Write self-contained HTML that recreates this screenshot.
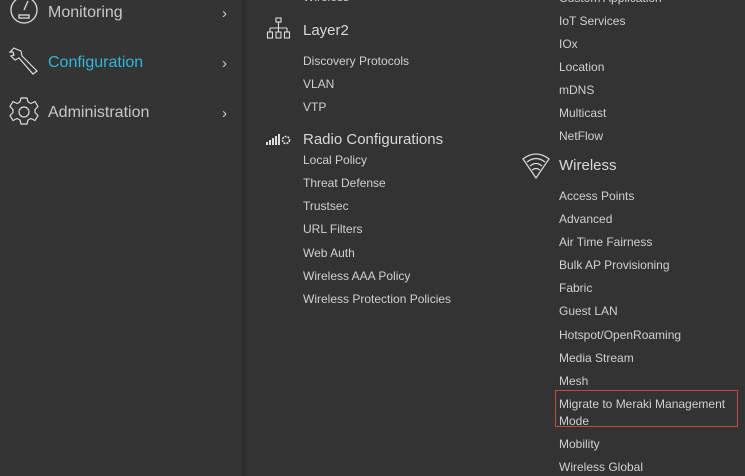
<!DOCTYPE html>
<html><head><meta charset="utf-8"><style>
body{margin:0;width:745px;height:476px;overflow:hidden;background:#333;font-family:"Liberation Sans",sans-serif;position:relative}
.t{position:absolute;white-space:nowrap;line-height:16px}
.i{font-size:12px;color:#d0d0d0;margin-top:1px}
.h{font-size:15px;color:#d8d8d8;line-height:18px;margin-top:1px}
.m{font-size:16px;color:#c8c8c8;line-height:20px;margin-top:1px}
.ch{position:absolute;left:222px;font-size:15px;color:#ccc;margin-top:1px}
svg{position:absolute}
</style></head><body>
<div style="position:absolute;left:242px;top:0;width:3px;height:476px;background:#2c2c2c"></div>
<div style="position:absolute;left:0;top:0;width:242px;height:476px;background:#343434"></div>

<svg style="left:8px;top:-6px" width="32" height="32" viewBox="0 0 32 32" fill="none" stroke="#ddd" stroke-width="1.3"><circle cx="16" cy="16" r="13"/><path d="M16 16 L20 7"/><rect x="11" y="21" width="10" height="3"/></svg>
<div class="t m" style="left:48px;top:2px">Monitoring</div><div class="ch" style="top:4px">&#8250;</div>

<svg style="left:8px;top:46px" width="32" height="32" viewBox="0 0 32 32" fill="none" stroke="#ddd" stroke-width="1.2"><path d="M6 2 L2 6 L5 6 L6 9 L3 10 L7 14 L11 12 L25 28 L29 25 L14 10 L13 5 L8 3 Z"/></svg>
<div class="t m" style="left:48px;top:52px;color:#2fb8d8">Configuration</div><div class="ch" style="top:54px">&#8250;</div>

<svg style="left:8px;top:96px" width="32" height="32" viewBox="0 0 32 32" fill="none" stroke="#ddd" stroke-width="1.2"><path d="M13 2h6l1 4 3 1.5 4-2 3 5-3 3v3l3 3-3 5-4-2-3 1.5-1 4h-6l-1-4-3-1.5-4 2-3-5 3-3v-3l-3-3 3-5 4 2 3-1.5z"/><circle cx="16" cy="16" r="5"/></svg>
<div class="t m" style="left:48px;top:102px">Administration</div><div class="ch" style="top:104px">&#8250;</div>

<div class="t i" style="left:303px;top:-12px">Wireless</div>
<svg style="left:266px;top:17px" width="26" height="24" viewBox="0 0 26 24" fill="none" stroke="#ddd" stroke-width="1.1"><rect x="10" y="1" width="5" height="4"/><path d="M12.5 5v6M4 11h17M4 11v4M12.5 11v4M21 11v4"/><rect x="1.5" y="15" width="5" height="6"/><rect x="10" y="15" width="5" height="6"/><rect x="18.5" y="15" width="5" height="6"/></svg>
<div class="t h" style="left:303px;top:21px">Layer2</div>
<div class="t i" style="left:303px;top:52px">Discovery Protocols</div>
<div class="t i" style="left:303px;top:75px">VLAN</div>
<div class="t i" style="left:303px;top:98px">VTP</div>
<svg style="left:266px;top:133px" width="26" height="12" viewBox="0 0 26 12" fill="#ddd"><rect x="0" y="9" width="2" height="3"/><rect x="3" y="7" width="2" height="5"/><rect x="6" y="5" width="2" height="7"/><rect x="9" y="3" width="2" height="9"/><rect x="12" y="1" width="2" height="11"/><circle cx="20" cy="7" r="3.5" fill="none" stroke="#ddd" stroke-width="1.6" stroke-dasharray="2 1"/></svg>
<div class="t h" style="left:303px;top:130px">Radio Configurations</div>
<div class="t i" style="left:303px;top:151px">Local Policy</div>
<div class="t i" style="left:303px;top:174px">Threat Defense</div>
<div class="t i" style="left:303px;top:197px">Trustsec</div>
<div class="t i" style="left:303px;top:220px">URL Filters</div>
<div class="t i" style="left:303px;top:244px">Web Auth</div>
<div class="t i" style="left:303px;top:267px">Wireless AAA Policy</div>
<div class="t i" style="left:303px;top:290px">Wireless Protection Policies</div>

<div class="t i" style="left:559px;top:-11px">Custom Application</div>
<div class="t i" style="left:559px;top:12px">IoT Services</div>
<div class="t i" style="left:559px;top:35px">IOx</div>
<div class="t i" style="left:559px;top:58px">Location</div>
<div class="t i" style="left:559px;top:81px">mDNS</div>
<div class="t i" style="left:559px;top:104px">Multicast</div>
<div class="t i" style="left:559px;top:127px">NetFlow</div>
<svg style="left:521px;top:151px" width="30" height="28" viewBox="0 0 30 28" fill="none" stroke="#ddd" stroke-width="1.2"><path d="M2 8 Q15 -2 28 8 L15 27 Z"/><path d="M6 11 Q15 4 24 11M9 15 Q15 10 21 15M11 19 Q15 16 19 19"/></svg>
<div class="t h" style="left:559px;top:156px">Wireless</div>
<div class="t i" style="left:559px;top:187px">Access Points</div>
<div class="t i" style="left:559px;top:210px">Advanced</div>
<div class="t i" style="left:559px;top:233px">Air Time Fairness</div>
<div class="t i" style="left:559px;top:256px">Bulk AP Provisioning</div>
<div class="t i" style="left:559px;top:279px">Fabric</div>
<div class="t i" style="left:559px;top:302px">Guest LAN</div>
<div class="t i" style="left:559px;top:326px">Hotspot/OpenRoaming</div>
<div class="t i" style="left:559px;top:349px">Media Stream</div>
<div class="t i" style="left:559px;top:372px">Mesh</div>
<div style="position:absolute;left:555px;top:390px;width:181px;height:35px;border:1.5px solid #c8473f"></div>
<div class="t i" style="left:559px;top:395px;line-height:17px">Migrate to Meraki Management<br>Mode</div>
<div class="t i" style="left:559px;top:435px">Mobility</div>
<div class="t i" style="left:559px;top:458px">Wireless Global</div>
</body></html>
